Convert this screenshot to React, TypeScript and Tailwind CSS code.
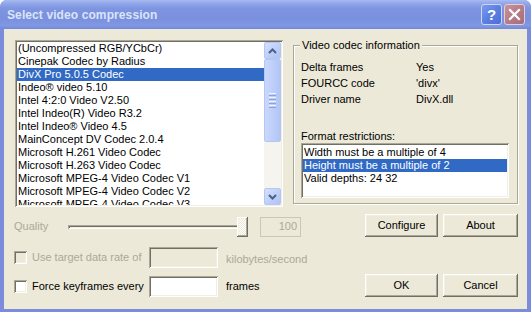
import React from "react";

const raised =
  "shadow-[inset_-1px_-1px_0_#716f64,inset_1px_1px_0_#ffffff,inset_-2px_-2px_0_#aca899,inset_2px_2px_0_#f1efe2]";
const sunken =
  "shadow-[inset_1px_1px_0_#aca899,inset_-1px_-1px_0_#ffffff,inset_2px_2px_0_#716f64,inset_-2px_-2px_0_#f1efe2]";

const codecs = [
  "(Uncompressed RGB/YCbCr)",
  "Cinepak Codec by Radius",
  "DivX Pro 5.0.5 Codec",
  "Indeo® video 5.10",
  "Intel 4:2:0 Video V2.50",
  "Intel Indeo(R) Video R3.2",
  "Intel Indeo® Video 4.5",
  "MainConcept DV Codec 2.0.4",
  "Microsoft H.261 Video Codec",
  "Microsoft H.263 Video Codec",
  "Microsoft MPEG-4 Video Codec V1",
  "Microsoft MPEG-4 Video Codec V2",
  "Microsoft MPEG-4 Video Codec V3",
];

function Chevron({ down }: { down?: boolean }) {
  return (
    <svg width="9" height="6" viewBox="0 0 9 6" className="block">
      <path
        d={down ? "M1 1 L4.5 4.5 L8 1" : "M1 5 L4.5 1.5 L8 5"}
        fill="none"
        stroke="#4d6185"
        strokeWidth="2"
      />
    </svg>
  );
}

function ScrollButton({ down }: { down?: boolean }) {
  return (
    <div className="w-[17px] h-[17px] shrink-0 rounded-[2px] border border-[#b4c6f3] bg-[linear-gradient(135deg,#d4e0fc_0%,#bccdf9_60%,#b0c3f4_100%)] flex items-center justify-center">
      <Chevron down={down} />
    </div>
  );
}

function Checkbox({ disabled }: { disabled?: boolean }) {
  return (
    <div
      className={`w-[13px] h-[13px] shrink-0 ${sunken} ${
        disabled ? "bg-[#ece9d8]" : "bg-white"
      }`}
    />
  );
}

function Btn({ label, w }: { label: string; w: string }) {
  return (
    <div
      className={`${w} h-[23px] flex items-center justify-center bg-[#ece9d8] ${raised} text-[11px] text-black`}
    >
      {label}
    </div>
  );
}

export default function App() {
  return (
    <div className="w-[531px] h-[312px] bg-white [font-family:'Liberation_Sans',Arial,sans-serif] text-[11px] text-black">
      <div className="w-[531px] h-[312px] flex flex-col rounded-t-[7px] overflow-hidden bg-[#7a8cda]">
        {/* Title bar */}
        <div className="h-[29px] shrink-0 flex items-center pl-[7px] pr-[6px] bg-[linear-gradient(180deg,#aabcf1_0%,#93a9ea_10%,#7e95e1_28%,#7a90de_65%,#8098e3_88%,#7288d9_100%)]">
          <div className="flex-1 text-[12px] font-bold text-[#dae4f8] tracking-[0.1px]">
            Select video compression
          </div>
          <div className="flex gap-[2px]">
            <div className="w-[21px] h-[21px] rounded-[3px] border border-[#c9d6f6] bg-[linear-gradient(135deg,#7b9aee_0%,#5b7fe2_50%,#4b6fd8_100%)] flex items-center justify-center text-white font-bold text-[15px] leading-none">
              ?
            </div>
            <div className="w-[21px] h-[21px] rounded-[3px] border border-[#e6cdd3] bg-[linear-gradient(135deg,#c7939d_0%,#b57d88_50%,#a86c78_100%)] flex items-center justify-center">
              <svg width="13" height="13" viewBox="0 0 13 13">
                <path
                  d="M2 2 L11 11 M11 2 L2 11"
                  stroke="#ffffff"
                  strokeWidth="2.2"
                  strokeLinecap="square"
                />
              </svg>
            </div>
          </div>
        </div>

        {/* Body */}
        <div className="flex-1 mx-[4px] mb-[3px] bg-[#ece9d8] flex flex-col">
          {/* Top row */}
          <div className="flex items-start pl-[11px] pt-[11px]">
            {/* Codec list */}
            <div className={`w-[268px] h-[167px] bg-white ${sunken} p-[2px] flex`}>
              <div className="flex-1 overflow-hidden">
                {codecs.map((c, i) => (
                  <div
                    key={c}
                    className={`h-[13px] leading-[13px] pl-[1px] whitespace-nowrap ${
                      i === 2 ? "bg-[#316ac5] text-white" : ""
                    }`}
                  >
                    {c}
                  </div>
                ))}
              </div>
              <div className="w-[17px] flex flex-col bg-[#f5f4ef]">
                <ScrollButton />
                <div className="h-[83px] shrink-0 rounded-[2px] border border-[#b4c6f3] bg-[linear-gradient(90deg,#c9d8fc_0%,#bccdf9_60%,#b2c5f5_100%)] flex flex-col items-center justify-center gap-[1px]">
                  <div className="w-[7px] h-[1px] bg-[#eef3ff]" />
                  <div className="w-[7px] h-[1px] bg-[#8ca3e0]" />
                  <div className="w-[7px] h-[1px] bg-[#eef3ff]" />
                  <div className="w-[7px] h-[1px] bg-[#8ca3e0]" />
                  <div className="w-[7px] h-[1px] bg-[#eef3ff]" />
                  <div className="w-[7px] h-[1px] bg-[#8ca3e0]" />
                  <div className="w-[7px] h-[1px] bg-[#eef3ff]" />
                  <div className="w-[7px] h-[1px] bg-[#8ca3e0]" />
                </div>
                <div className="flex-1" />
                <ScrollButton down />
              </div>
            </div>

            {/* Group box */}
            <div className="relative ml-[10px] mt-[5px] w-[225px] h-[159px] border border-[#aca899] shadow-[inset_1px_1px_0_#ffffff,1px_1px_0_#ffffff] flex flex-col pl-[7px] pt-[13px]">
              <span className="absolute left-[6px] top-[-8px] px-[2px] leading-[14px] bg-[#ece9d8]">
                Video codec information
              </span>
              {[
                ["Delta frames", "Yes"],
                ["FOURCC code", "'divx'"],
                ["Driver name", "DivX.dll"],
              ].map(([k, v]) => (
                <div key={k} className="flex h-[16px] leading-[16px]">
                  <div className="w-[115px]">{k}</div>
                  <div>{v}</div>
                </div>
              ))}
              <div className="mt-[23px] h-[13px] leading-[13px]">Format restrictions:</div>
              <div className={`w-[208px] h-[55px] bg-white ${sunken} p-[2px] pt-[3px]`}>
                <div className="h-[13px] leading-[13px] pl-[1px]">Width must be a multiple of 4</div>
                <div className="h-[13px] leading-[13px] pl-[1px] bg-[#316ac5] text-white">
                  Height must be a multiple of 2
                </div>
                <div className="h-[13px] leading-[13px] pl-[1px]">Valid depths: 24 32</div>
              </div>
            </div>
          </div>

          {/* Bottom section */}
          <div className="flex mt-[7px]">
            <div className="w-[361px] pl-[10px] pt-[2px] flex flex-col">
              {/* Quality */}
              <div className="flex items-center h-[21px]">
                <div className="w-[54px] text-[#aca899]">Quality</div>
                <div className="relative w-[182px] h-[21px] flex items-center">
                  <div className={`w-[176px] h-[4px] ${sunken}`} />
                  <div
                    className={`absolute left-[169px] top-[1px] w-[11px] h-[20px] ${raised} bg-[repeating-conic-gradient(#ffffff_0_25%,#ece9d8_0_50%)] bg-[length:2px_2px]`}
                  />
                </div>
                <div className="ml-[10px] w-[41px] h-[20px] border border-[#c9c7ba] flex items-center justify-end pr-[3px] text-[#aca899]">
                  100
                </div>
              </div>
              {/* Target data rate */}
              <div className="flex items-center h-[21px] mt-[10px]">
                <Checkbox disabled />
                <div className="ml-[5px] w-[117px] text-[#aca899] whitespace-nowrap">
                  Use target data rate of
                </div>
                <div className={`w-[69px] h-[21px] ${sunken} bg-[#ece9d8]`} />
                <div className="ml-[8px] mt-[3px] text-[#aca899]">kilobytes/second</div>
              </div>
              {/* Force keyframes */}
              <div className="flex items-center h-[21px] mt-[8px]">
                <Checkbox />
                <div className="ml-[5px] w-[117px] whitespace-nowrap">Force keyframes every</div>
                <div className={`w-[69px] h-[21px] ${sunken} bg-white`} />
                <div className="ml-[8px]">frames</div>
              </div>
            </div>

            {/* Buttons */}
            <div className="flex flex-col">
              <div className="flex gap-[5px]">
                <Btn label="Configure" w="w-[73px]" />
                <Btn label="About" w="w-[75px]" />
              </div>
              <div className="flex gap-[5px] mt-[37px]">
                <Btn label="OK" w="w-[73px]" />
                <Btn label="Cancel" w="w-[75px]" />
              </div>
            </div>
          </div>
        </div>
      </div>
    </div>
  );
}
